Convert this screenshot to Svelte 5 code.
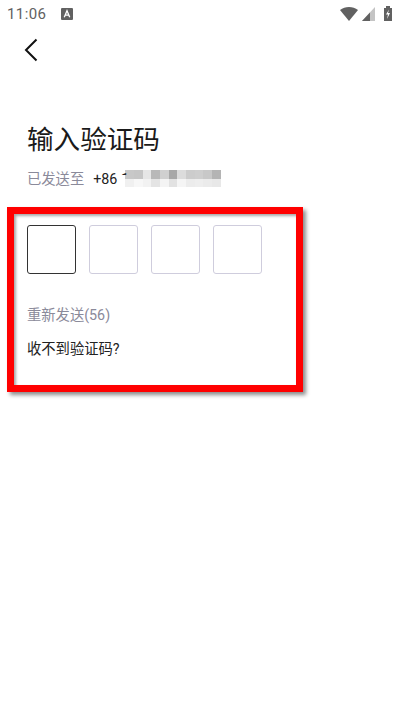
<script>
	const digits = ['', '', '', ''];

	// mosaic over the phone number, two rows of 11 blocks
	const mosaic = [
		'#c8c8c8', '#c6c6c6', '#e6e6e6', '#b8b8b8', '#d0d0d0', '#a8a8a8', '#dcdcdc', '#cccccc', '#cecece', '#c8c8c8', '#b4b4b4',
		'#f0f0f0', '#f7f7f7', '#f2f2f2', '#e4e4e4', '#f4f4f4', '#e2e2e2', '#f5f5f5', '#ececec', '#eeeeee', '#ebebeb', '#e8e8e8'
	];
</script>

<div class="page">
	<div class="status-bar">
		<div class="status-left">
			<span class="time">11:06</span>
			<span class="notif">
				<svg viewBox="0 0 11 11" width="12" height="12">
					<rect width="11" height="11" rx="1" fill="#616161" />
					<path d="M3 8.500 5.500 2.500 8 8.500M4 6.600H7" fill="none" stroke="#fff" stroke-width="1.200" />
				</svg>
			</span>
		</div>
		<div class="status-right">
			<svg viewBox="0 0 18 14" width="18" height="14">
				<path d="M0 3C5-1 13-1 18 3L9 14Z" fill="#616161" />
			</svg>
			<svg viewBox="0 0 13 14" width="13" height="14">
				<path d="M0 14 13 0V14Z" fill="#c4c4c4" />
				<path d="M0 14 8 5.400V14Z" fill="#616161" />
			</svg>
			<svg class="battery" viewBox="0 0 8 15" width="8" height="15">
				<path d="M0 2H2V0H6V2H8V15H0Z" fill="#616161" />
				<path d="M5 3.500 2 8.500H4L3 13 6 7H4Z" fill="#fff" />
			</svg>
		</div>
	</div>

	<button class="back" aria-label="返回">
		<svg viewBox="0 0 14 24" width="14" height="24">
			<path d="M12.500 1.500 2 12l10.500 10.500" fill="none" stroke="#111" stroke-width="2" />
		</svg>
	</button>

	<h1>输入验证码</h1>

	<div class="sent">
		<span class="sent-label">已发送至</span>
		<span class="sent-number">+86 <span class="masked">1</span></span>
		<span class="mosaic">
			{#each mosaic as color}
				<i style="background: {color}"></i>
			{/each}
		</span>
	</div>

	<section class="code-panel">
		<div class="cells">
			{#each digits as digit, i}
				<div class="cell" class:active={i === 0}>{digit}</div>
			{/each}
		</div>
		<p class="resend">重新发送(56)</p>
		<p class="help">收不到验证码?</p>
	</section>
</div>

<style>
	:global(body) {
		background: #fff;
	}

	.page {
		width: 400px;
		height: 712px;
		overflow: hidden;
		background: #fff;
		font-family: 'Roboto', 'Noto Sans CJK SC', sans-serif;
	}

	.status-bar {
		height: 27px;
		padding: 0 8px 0 7px;
		display: flex;
		justify-content: space-between;
		align-items: center;
		box-sizing: border-box;
	}

	.status-left,
	.status-right {
		display: flex;
		align-items: center;
	}

	.status-right {
		gap: 4px;
	}

	.battery {
		margin-left: 5px;
	}

	.time {
		font-size: 15px;
		color: #616161;
		letter-spacing: 0.4px;
	}

	.notif {
		display: flex;
		margin-left: 15px;
	}

	.back {
		display: block;
		margin: 11px 0 0 24px;
		padding: 0;
		height: 24px;
		border: none;
		background: none;
	}

	h1 {
		margin: 60px 0 0 27px;
		font-size: 26.600px;
		line-height: 36px;
		font-weight: 400;
		color: #1a1a1a;
	}

	.sent {
		margin: 9px 0 0 27px;
		height: 20px;
		display: flex;
		align-items: center;
		font-size: 14.300px;
	}

	.sent-label {
		color: #8a8a9a;
	}

	.sent-number {
		margin: 3px 0 0 9px;
		color: #222;
		width: 32px;
		white-space: nowrap;
	}

	.masked {
		display: inline-block;
		clip-path: inset(0 0 72% 0);
	}

	.mosaic {
		display: grid;
		grid-template-columns: repeat(11, 8.700px);
		grid-auto-rows: 8.500px;
		margin-top: 3px;
	}

	.code-panel {
		width: 296px;
		height: 185px;
		margin: 20px 0 0 7px;
		padding: 11px 0 0 13px;
		box-sizing: border-box;
		border: 7px solid #f00;
		box-shadow: 3px 3px 4px rgba(0, 0, 0, 0.45), inset 2px 2px 3px rgba(0, 0, 0, 0.35);
	}

	.cells {
		display: flex;
		gap: 13px;
	}

	.cell {
		width: 49px;
		height: 49px;
		box-sizing: border-box;
		border: 1px solid #cfcddd;
		border-radius: 3px;
	}

	.cell.active {
		border-color: #333;
	}

	.resend {
		margin: 31px 0 0;
		font-size: 14.300px;
		line-height: 20px;
		color: #8a8a9a;
	}

	.help {
		margin: 14px 0 0;
		font-size: 14.300px;
		line-height: 20px;
		color: #222;
	}
</style>
